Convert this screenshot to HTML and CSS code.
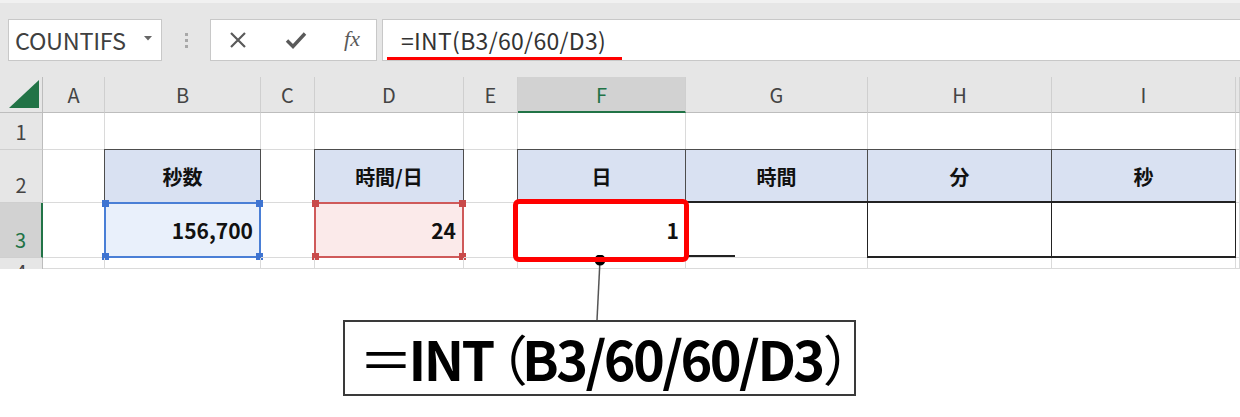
FILE: index.html
```html
<!DOCTYPE html>
<html lang="ja">
<head>
  <meta charset="UTF-8" />
  <title>INT関数 日数の計算</title>
  <link rel="stylesheet" href="styles.css">
</head>
<body>
<div class="page">

  <!-- Formula bar -->
  <div class="toolbar">
    <div class="namebox">
      <span>COUNTIFS</span>
      <svg class="caret" width="8" height="5" viewBox="0 0 8 5"><polygon points="0,0 8,0 4,4.5" fill="#666"/></svg>
    </div>
    <div class="grip"><i></i><i></i><i></i></div>
    <div class="btns">
      <svg width="20" height="20" viewBox="0 0 20 20"><path d="M3 3 L17 17 M17 3 L3 17" stroke="#5a5a5a" stroke-width="2.2" fill="none"/></svg>
      <svg width="22" height="20" viewBox="0 0 22 20"><path d="M2 10.5 L8 16.5 L20 3.5" stroke="#5a5a5a" stroke-width="3.4" fill="none"/></svg>
      <span class="fx">fx</span>
    </div>
    <div class="formula">
      <span class="ftext">=INT(B3/60/60/D3)</span>
    </div>
  </div>

  <!-- Sheet -->
  <div class="sheet">
    <div class="corner"><svg width="30" height="28" viewBox="0 0 30 28"><polygon points="30,0 30,28 0,28" fill="#217346"/></svg></div>
    <div class="ch">A</div>
    <div class="ch">B</div>
    <div class="ch">C</div>
    <div class="ch">D</div>
    <div class="ch">E</div>
    <div class="ch sel">F</div>
    <div class="ch">G</div>
    <div class="ch">H</div>
    <div class="ch">I</div>
    <div class="ch"></div>

    <div class="rh">1</div>
    <div class="c"></div><div class="c"></div><div class="c"></div><div class="c"></div>
    <div class="c"></div><div class="c"></div><div class="c"></div><div class="c"></div>
    <div class="c"></div><div class="c"></div>

    <div class="rh">2</div>
    <div class="c"></div>
    <div class="c th">秒数</div>
    <div class="c"></div>
    <div class="c th">時間/日</div>
    <div class="c"></div>
    <div class="c th">日</div>
    <div class="c th">時間</div>
    <div class="c th">分</div>
    <div class="c th">秒</div>
    <div class="c"></div>

    <div class="rh sel">3</div>
    <div class="c"></div>
    <div class="c num ref-blue">156,700<b class="h tl"></b><b class="h tr"></b><b class="h bl"></b><b class="h br"></b></div>
    <div class="c"></div>
    <div class="c num ref-red">24<b class="h tl"></b><b class="h tr"></b><b class="h bl"></b><b class="h br"></b></div>
    <div class="c"></div>
    <div class="c num target">1</div>
    <div class="c td td-g"></div>
    <div class="c td"></div>
    <div class="c td"></div>
    <div class="c"></div>

    <div class="rh rh-cut">4</div>
    <div class="c"></div><div class="c"></div><div class="c"></div><div class="c"></div>
    <div class="c"></div><div class="c"></div><div class="c"></div><div class="c"></div>
    <div class="c"></div><div class="c"></div>
  </div>

  <!-- Callout -->
  <div class="note">
    <div class="note-box"><span class="eq">＝</span>INT<span class="po">（</span>B3/60/60/D3<span class="pc">）</span></div>
  </div>
  <svg class="connector" width="20" height="70" viewBox="0 0 20 70">
    <line x1="10" y1="5" x2="7" y2="65" stroke="#555" stroke-width="1.5"/>
    <circle cx="10" cy="5" r="5.5" fill="#000"/>
  </svg>

</div>
</body>
</html>
```

FILE: styles.css
```css
/* --------------------------------
   Reset / Basic
----------------------------------- */
* {
  margin: 0;
  padding: 0;
  box-sizing: border-box;
}
html, body {
  background: #fff;
  color: #333;
  font-family: "Noto Sans CJK JP", "Noto Sans", sans-serif;
}
.page {
  position: relative;
  width: 1240px;
  height: 417px;
  overflow: hidden;
}

/* --------------------------------
   Formula bar
----------------------------------- */
.toolbar {
  height: 77px;
  background: #e6e6e6;
  border-top: 3px solid #f1f1f1;
  padding: 16px 0 0 8px;
  display: flex;
  align-items: flex-start;
}
.namebox {
  width: 154px;
  height: 42px;
  background: #fff;
  border: 1px solid #c8c8c8;
  display: flex;
  align-items: center;
  justify-content: space-between;
  padding: 0 9px 0 6px;
  font-size: 23.5px;
  color: #404040;
}
.namebox span {
  letter-spacing: -0.3px;
}
.caret {
  margin-bottom: 4px;
}
.grip {
  width: 48px;
  height: 42px;
  display: flex;
  flex-direction: column;
  align-items: center;
  justify-content: center;
  gap: 3px;
}
.grip i {
  display: block;
  width: 3px;
  height: 3px;
  background: #a8a8a8;
}
.btns {
  width: 167px;
  height: 42px;
  background: #fff;
  border: 1px solid #c8c8c8;
  display: flex;
  align-items: center;
  justify-content: space-between;
  padding: 0 16px 0 17px;
}
.fx {
  font-family: "Liberation Serif", serif;
  font-style: italic;
  font-size: 22px;
  color: #5a5a5a;
  margin-bottom: 3px;
}
.formula {
  flex: 1;
  height: 42px;
  margin-left: 5px;
  background: #fff;
  border: 1px solid #c8c8c8;
  border-right: none;
  padding: 0 0 0 4px;
  display: flex;
  align-items: center;
}
.ftext {
  display: inline-block;
  font-size: 23px;
  color: #333;
  padding: 0 16px 0 14px;
  margin-top: 2px;
  line-height: 34px;
  border-bottom: 3px solid #ff0000;
  letter-spacing: 0.3px;
  white-space: nowrap;
}

/* --------------------------------
   Sheet grid
----------------------------------- */
.sheet {
  display: grid;
  grid-template-columns: 43px 62px 156px 54px 149px 54px 168px 182px 184px 184px 4px;
  grid-template-rows: 36px 37px 53px 55px 11px;
  font-size: 20px;
}
.corner {
  background: #e6e6e6;
  border-right: 1px solid #bdbdbd;
  border-bottom: 1px solid #bdbdbd;
  display: flex;
  align-items: flex-end;
  justify-content: flex-end;
  padding: 0 3px 4px 0;
}
.ch {
  background: #e6e6e6;
  border-right: 1px solid #cfcfcf;
  border-bottom: 1px solid #bdbdbd;
  display: flex;
  align-items: center;
  justify-content: center;
  color: #444;
}
.ch.sel {
  background: #d2d2d2;
  color: #217346;
  border-bottom: 2px solid #217346;
}
.rh {
  background: #e6e6e6;
  border-right: 1px solid #bdbdbd;
  border-bottom: 1px solid #cfcfcf;
  display: flex;
  align-items: flex-end;
  justify-content: center;
  padding-bottom: 5px;
  color: #444;
  line-height: 1.2;
  overflow: hidden;
}
.rh.sel {
  background: #d2d2d2;
  color: #217346;
  border-right: 2px solid #217346;
}
.rh-cut {
  align-items: flex-start;
  padding: 2px 0 0;
  border-bottom: none;
}
.c {
  position: relative;
  border-right: 1px solid #dadada;
  border-bottom: 1px solid #dadada;
  display: flex;
  align-items: center;
  justify-content: flex-end;
  font-weight: bold;
  color: #111;
}
.th {
  background: #d9e1f2;
  border: 1px solid #4d4d4d;
  margin: -1px 0 0 -1px;
  justify-content: center;
}
.td {
  border: 1px solid #222;
  border-top: 2px solid #222;
  border-bottom: 2px solid #222;
  margin: -2px 0 0 -1px;
}
.td-g {
  border-left: none;
  border-bottom: 1px solid #dadada;
  background: linear-gradient(#222, #222) no-repeat left bottom / 50px 2px;
}
.num {
  font-size: 21px;
  padding-right: 6px;
}

/* 参照セルの色枠 */
.ref-blue {
  background: #e9f0fb;
  border: 2px solid #4a7fd6;
  margin: -1px 0 0 -1px;
}
.ref-red {
  background: #fbeaea;
  border: 2px solid #cf5a5a;
  margin: -1px 0 0 -1px;
}
.h {
  position: absolute;
  width: 7px;
  height: 7px;
}
.ref-blue .h { background: #3f74d1; }
.ref-red .h { background: #c94a4a; }
.h.tl { top: -4px; left: -4px; }
.h.tr { top: -4px; right: -4px; }
.h.bl { bottom: -4px; left: -4px; }
.h.br { bottom: -4px; right: -4px; }

/* 赤枠 */
.target {
  padding-right: 6px;
}
.target::after {
  content: "";
  position: absolute;
  top: -4px;
  left: -5px;
  right: -4px;
  bottom: -5px;
  border: 5px solid #ff0000;
  border-radius: 6px;
  z-index: 2;
}

/* --------------------------------
   Callout
----------------------------------- */
.note {
  padding: 51px 0 0 343px;
}
.note-box {
  width: 513px;
  height: 76px;
  border: 2px solid #3a3a3a;
  background: #fff;
  display: flex;
  align-items: center;
  padding-left: 14px;
  font-size: 54px;
  font-weight: bold;
  color: #000;
  letter-spacing: -2.6px;
  line-height: 1;
  white-space: nowrap;
}
.note-box .eq {
  font-weight: normal;
  margin-right: -2px;
}
.note-box .po {
  font-weight: normal;
  margin-left: -19px;
  margin-right: -3px;
}
.note-box .pc {
  font-weight: normal;
}
.connector {
  position: absolute;
  left: 590px;
  top: 255px;
}
```
